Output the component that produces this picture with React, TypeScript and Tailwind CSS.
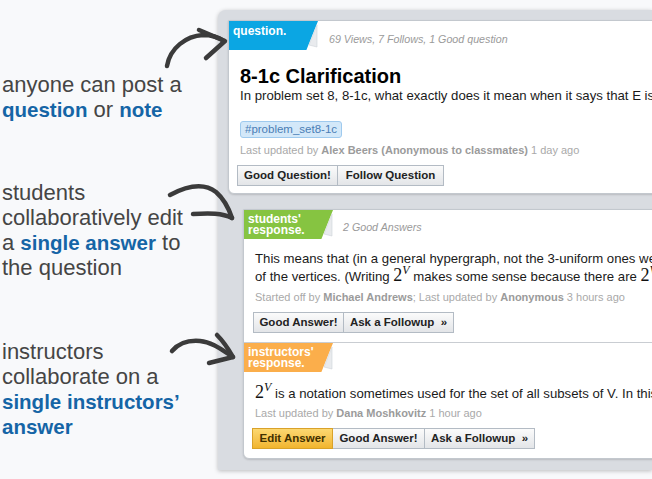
import React from 'react';

type BtnProps = { w: string; first?: boolean; yellow?: boolean; children: React.ReactNode };

function Btn({ w, first, yellow, children }: BtnProps) {
  const base = 'h-[21px] flex items-center justify-center text-[11.5px] font-bold border';
  const look = yellow
    ? 'bg-gradient-to-b from-[#fcd870] to-[#f1b52c] border-[#d9a22a] text-[#3f3000]'
    : 'bg-gradient-to-b from-[#fbfbfb] to-[#e3e5e8] border-[#b3bbc4] text-[#222]';
  return <div className={`${base} ${look} ${w} ${first ? '' : 'border-l-0'}`}>{children}</div>;
}

function Curl() {
  return (
    <svg className="absolute right-0 top-0" width="12" height="30" viewBox="0 0 12 30">
      <polygon points="12,0 12,30 0,30" fill="#ffffff" />
      <polygon points="3,24 11,4 11,26" fill="#e9ebee" stroke="#cfd3d8" strokeWidth="0.6" />
    </svg>
  );
}

function Tab({ color, pt, children }: { color: string; pt: string; children: React.ReactNode }) {
  return (
    <div className={`relative w-[89px] h-[29px] shrink-0 rounded-br-[5px] ${color} ${pt} pl-[4px] text-[12px] leading-[11px] font-bold text-white`}>
      {children}
      <Curl />
    </div>
  );
}

function Two() {
  return (
    <span className="font-['Liberation_Serif',serif] text-[18px] leading-[0] text-[#111]">
      2<span className="relative top-[-7px] italic text-[12px] leading-[0]">V</span>
    </span>
  );
}

export default function App() {
  return (
    <div className="relative w-[652px] h-[479px] overflow-hidden bg-[#f8f9fb] flex font-['Liberation_Sans',Arial,sans-serif]">
      <div className="w-[218px] shrink-0 pl-[2px] pt-[72px] text-[22px] leading-[25px] text-[#454545]">
        <p>
          anyone can post a<br />
          <b className="text-[20.5px] text-[#1565a6]">question</b> or <b className="text-[20.5px] text-[#1565a6]">note</b>
        </p>
        <p className="mt-[58px]">
          students<br />
          collaboratively edit<br />
          a <b className="text-[20.5px] text-[#1565a6]">single answer</b> to<br />
          the question
        </p>
        <p className="mt-[59px]">
          instructors<br />
          collaborate on a<br />
          <b className="text-[20.5px] text-[#1565a6]">single instructors’</b>
          <br />
          <b className="text-[20.5px] text-[#1565a6]">answer</b>
        </p>
      </div>

      <div className="mt-[10px] h-[460px] flex-1 min-w-0 overflow-hidden rounded-tl-[8px] bg-[#d9dce1] pl-[10px] pt-[10px] shadow-[0_1px_4px_rgba(0,0,0,0.25)]">
        {/* question card */}
        <div className="w-[480px] bg-white border border-[#c3c8ce] rounded-bl-[6px] shadow-[0_1px_2px_rgba(0,0,0,0.15)] pb-[7px]">
          <div className="flex items-start">
            <Tab color="bg-[#0ba6e3]" pt="pt-[5px]">question.</Tab>
            <div className="ml-[11px] mt-[10px] text-[10.7px] italic text-[#9a9a9a]">69 Views, 7 Follows, 1 Good question</div>
          </div>
          <div className="pl-[11px] whitespace-nowrap">
            <div className="mt-[14px] text-[20px] leading-[24px] font-bold text-black">8-1c Clarification</div>
            <div className="text-[13.2px] leading-[16px] text-[#1a1a1a]">
              In problem set 8, 8-1c, what exactly does it mean when it says that E is a set of subsets of V?
            </div>
            <div className="mt-[17px] w-fit h-[17px] px-[4px] rounded-[3px] border border-[#9fcaee] bg-[#d3e8f9] text-[11.5px] leading-[15px] text-[#4a7db5]">
              #problem_set8-1c
            </div>
            <div className="mt-[5px] text-[11px] leading-[14px] text-[#a9a9a9]">
              Last updated by <b className="text-[#9b9b9b]">Alex Beers (Anonymous to classmates)</b> 1 day ago
            </div>
            <div className="mt-[8px] ml-[-3px] flex">
              <Btn w="w-[101px]" first>Good Question!</Btn>
              <Btn w="w-[106px]">Follow Question</Btn>
            </div>
          </div>
        </div>

        {/* responses */}
        <div className="mt-[15px] ml-[15px] w-[480px] bg-white border border-[#c3c8ce] rounded-bl-[6px] shadow-[0_1px_2px_rgba(0,0,0,0.15)]">
          <div className="pb-[9px]">
            <div className="flex items-start">
              <Tab color="bg-[#86c441]" pt="pt-[4px]">
                students'<br />response.
              </Tab>
              <div className="ml-[10px] mt-[9px] text-[10.7px] italic text-[#9a9a9a]">2 Good Answers</div>
            </div>
            <div className="pl-[11px] whitespace-nowrap">
              <div className="mt-[11px] text-[13.2px] leading-[18px] text-[#1a1a1a]">
                <div>This means that (in a general hypergraph, not the 3-uniform ones we saw in class) E can be any set</div>
                <div>
                  of the vertices. (Writing <Two /> makes some sense because there are <Two /> subsets.)
                </div>
              </div>
              <div className="mt-[4px] text-[11px] leading-[14px] text-[#a9a9a9]">
                Started off by <b className="text-[#9b9b9b]">Michael Andrews</b>; Last updated by{' '}
                <b className="text-[#9b9b9b]">Anonymous</b> 3 hours ago
              </div>
              <div className="mt-[8px] ml-[-2px] flex">
                <Btn w="w-[91px]" first>Good Answer!</Btn>
                <Btn w="w-[110px]">Ask a Followup&nbsp;&nbsp;»</Btn>
              </div>
            </div>
          </div>
          <div className="border-t border-[#c9cdd2] pb-[9px]">
            <Tab color="bg-[#fbae4b]" pt="pt-[4px]">
              instructors'<br />response.
            </Tab>
            <div className="pl-[11px] whitespace-nowrap">
              <div className="mt-[13px] text-[13.2px] leading-[18px] text-[#1a1a1a]">
                <Two /> is a notation sometimes used for the set of all subsets of V. In this problem E is a subset.
              </div>
              <div className="mt-[3px] text-[11px] leading-[14px] text-[#a9a9a9]">
                Last updated by <b className="text-[#9b9b9b]">Dana Moshkovitz</b> 1 hour ago
              </div>
              <div className="mt-[8px] ml-[-3px] flex">
                <Btn w="w-[81px]" first yellow>Edit Answer</Btn>
                <Btn w="w-[92px]">Good Answer!</Btn>
                <Btn w="w-[110px]">Ask a Followup&nbsp;&nbsp;»</Btn>
              </div>
            </div>
          </div>
        </div>
      </div>

      {/* hand-drawn arrows */}
      <svg className="absolute inset-0 pointer-events-none" width="652" height="479" viewBox="0 0 652 479">
        <g fill="none" stroke="#3b3b3b" strokeWidth="4.5" strokeLinecap="round" strokeLinejoin="round">
          <path d="M167 66 C 170 48, 186 36, 203 35 C 212 35, 218 37, 224 41" />
          <path d="M199 30 L 225 41 L 206 58" />
          <path d="M170 195 C 185 187, 203 182, 216 192 C 224 199, 229 209, 232 218" />
          <path d="M193 214 C 210 213, 222 213, 232 218" />
          <path d="M172 351 C 178 344, 188 340, 200 341 C 212 342, 222 350, 233 357" />
          <path d="M217 335 C 224 342, 229 350, 233 357 L 209 363" />
        </g>
      </svg>
    </div>
  );
}
